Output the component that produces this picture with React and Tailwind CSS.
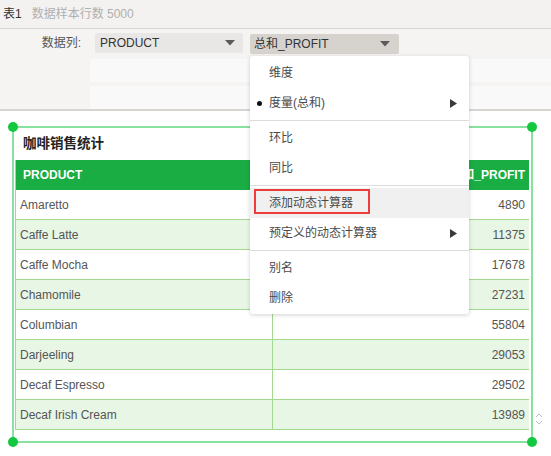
import React from "react";

const rows = [
  ["Amaretto", "4890"],
  ["Caffe Latte", "11375"],
  ["Caffe Mocha", "17678"],
  ["Chamomile", "27231"],
  ["Columbian", "55804"],
  ["Darjeeling", "29053"],
  ["Decaf Espresso", "29502"],
  ["Decaf Irish Cream", "13989"],
];

function Caret() {
  return (
    <svg width="10" height="6" viewBox="0 0 10 6" className="shrink-0">
      <path d="M0 0 L10 0 L5 5.5 Z" fill="#5a5a5a" />
    </svg>
  );
}

function RightArrow() {
  return (
    <svg width="7" height="9" viewBox="0 0 7 9" className="shrink-0">
      <path d="M0 0 L7 4.5 L0 9 Z" fill="#3a3a3a" />
    </svg>
  );
}

function Item({ children, arrow, bullet, highlight, box }) {
  return (
    <div
      className={
        "relative flex items-center h-[30px] pl-[19px] pr-[12px] text-[12px] text-[#4a4a4a] " +
        (highlight ? "bg-[#f0f0f0]" : "")
      }
    >
      {bullet && (
        <span className="absolute left-[7px] top-[13px] w-[5px] h-[5px] rounded-full bg-[#111]" />
      )}
      <span className="flex-1">{children}</span>
      {arrow && <RightArrow />}
      {box && (
        <span className="absolute left-[4px] top-[1px] w-[116px] h-[25px] border-2 border-[#ee3b3b]" />
      )}
    </div>
  );
}

function Sep() {
  return (
    <div className="h-[5px] flex items-center">
      <div className="w-full h-px bg-[#dcdcdc]" />
    </div>
  );
}

export default function App() {
  return (
    <div
      className="relative w-[551px] h-[456px] overflow-hidden bg-white"
      style={{ fontFamily: '"Liberation Sans", "Noto Sans CJK SC", Arial, sans-serif' }}
    >
      {/* top bar */}
      <div className="h-[29px] bg-[#f3f2f0] border-b border-[#d9d6d1] flex items-center pl-[3px] text-[12px]">
        <span className="text-[#333]">表1</span>
        <span className="ml-[10px] text-[#b0b0b0]">数据样本行数 5000</span>
      </div>

      {/* config area */}
      <div className="h-[82px] bg-[#f5f4f2] border-b-2 border-[#d8d5d0] pt-[4px]">
        <div className="flex items-start h-[22px]">
          <div className="w-[81px] text-right text-[12px] text-[#555] leading-[20px]">数据列:</div>
          <div className="ml-[14px] w-[148px] h-[20px] rounded-[2px] bg-[#e8e7e5] flex items-center pl-[5px] pr-[8px] text-[12px] text-[#333]">
            <span className="flex-1">PRODUCT</span>
            <Caret />
          </div>
          <div className="ml-[7px] mt-[1px] w-[149px] h-[20px] rounded-[2px] bg-[#d6d3cf] flex items-center pl-[4px] pr-[9px] text-[12px] text-[#333]">
            <span className="flex-1">总和_PROFIT</span>
            <Caret />
          </div>
        </div>
        <div className="ml-[90px] mt-[4px] h-[23px] bg-[#f9f9f9]" />
        <div className="ml-[90px] mt-[4px] h-[23px] bg-[#f9f9f9]" />
      </div>

      {/* content */}
      <div className="pt-[15px] pl-[12px]">
        <div className="relative w-[521px] h-[317px] border-2 border-[#86e29e]">
          <span className="absolute -left-[6px] -top-[6px] w-[10px] h-[10px] rounded-full bg-[#13c73f]" />
          <span className="absolute -right-[6px] -top-[6px] w-[10px] h-[10px] rounded-full bg-[#13c73f]" />
          <span className="absolute -left-[6px] -bottom-[6px] w-[10px] h-[10px] rounded-full bg-[#13c73f]" />
          <span className="absolute -right-[6px] -bottom-[6px] w-[10px] h-[10px] rounded-full bg-[#13c73f]" />

          <div className="h-[32px] flex items-center pl-[9px] text-[13.5px] font-bold text-[#222]">
            咖啡销售统计
          </div>
          <div className="ml-[1px] w-[514px] border-l border-[#a3d98e]">
            <div className="flex h-[30px] bg-[#19ad43] text-white font-bold text-[12px] items-center">
              <div className="w-[257px] pl-[7px]">PRODUCT</div>
              <div className="flex-1 text-right pr-[4px]">总和_PROFIT</div>
            </div>
            {rows.map(([name, val], i) => (
              <div
                key={name}
                className={
                  "flex h-[30px] items-center text-[12px] text-[#555] border-b border-[#a3d98e] " +
                  (i % 2 === 1 ? "bg-[#e8f6e6]" : "bg-white")
                }
              >
                <div className="w-[257px] h-full flex items-center pl-[4px] border-r border-[#a3d98e]">{name}</div>
                <div className="flex-1 text-right pr-[4px]">{val}</div>
              </div>
            ))}
          </div>
        </div>
      </div>

      {/* scroll icon */}
      <svg className="absolute left-[534px] top-[411px]" width="10" height="16" viewBox="0 0 10 16">
        <path d="M2 6 L5 3 L8 6" fill="none" stroke="#bdbdbd" strokeWidth="1" />
        <path d="M2 10 L5 13 L8 10" fill="none" stroke="#bdbdbd" strokeWidth="1" />
      </svg>

      {/* dropdown menu */}
      <div className="absolute left-[250px] top-[56px] w-[219px] bg-white rounded-[3px] shadow-[0_1px_4px_rgba(0,0,0,0.18)] pt-[2px] pb-[1px]">
        <Item>维度</Item>
        <Item bullet arrow>度量(总和)</Item>
        <Sep />
        <Item>环比</Item>
        <Item>同比</Item>
        <Sep />
        <Item highlight box>添加动态计算器</Item>
        <Item arrow>预定义的动态计算器</Item>
        <Sep />
        <Item>别名</Item>
        <Item>删除</Item>
      </div>
    </div>
  );
}
